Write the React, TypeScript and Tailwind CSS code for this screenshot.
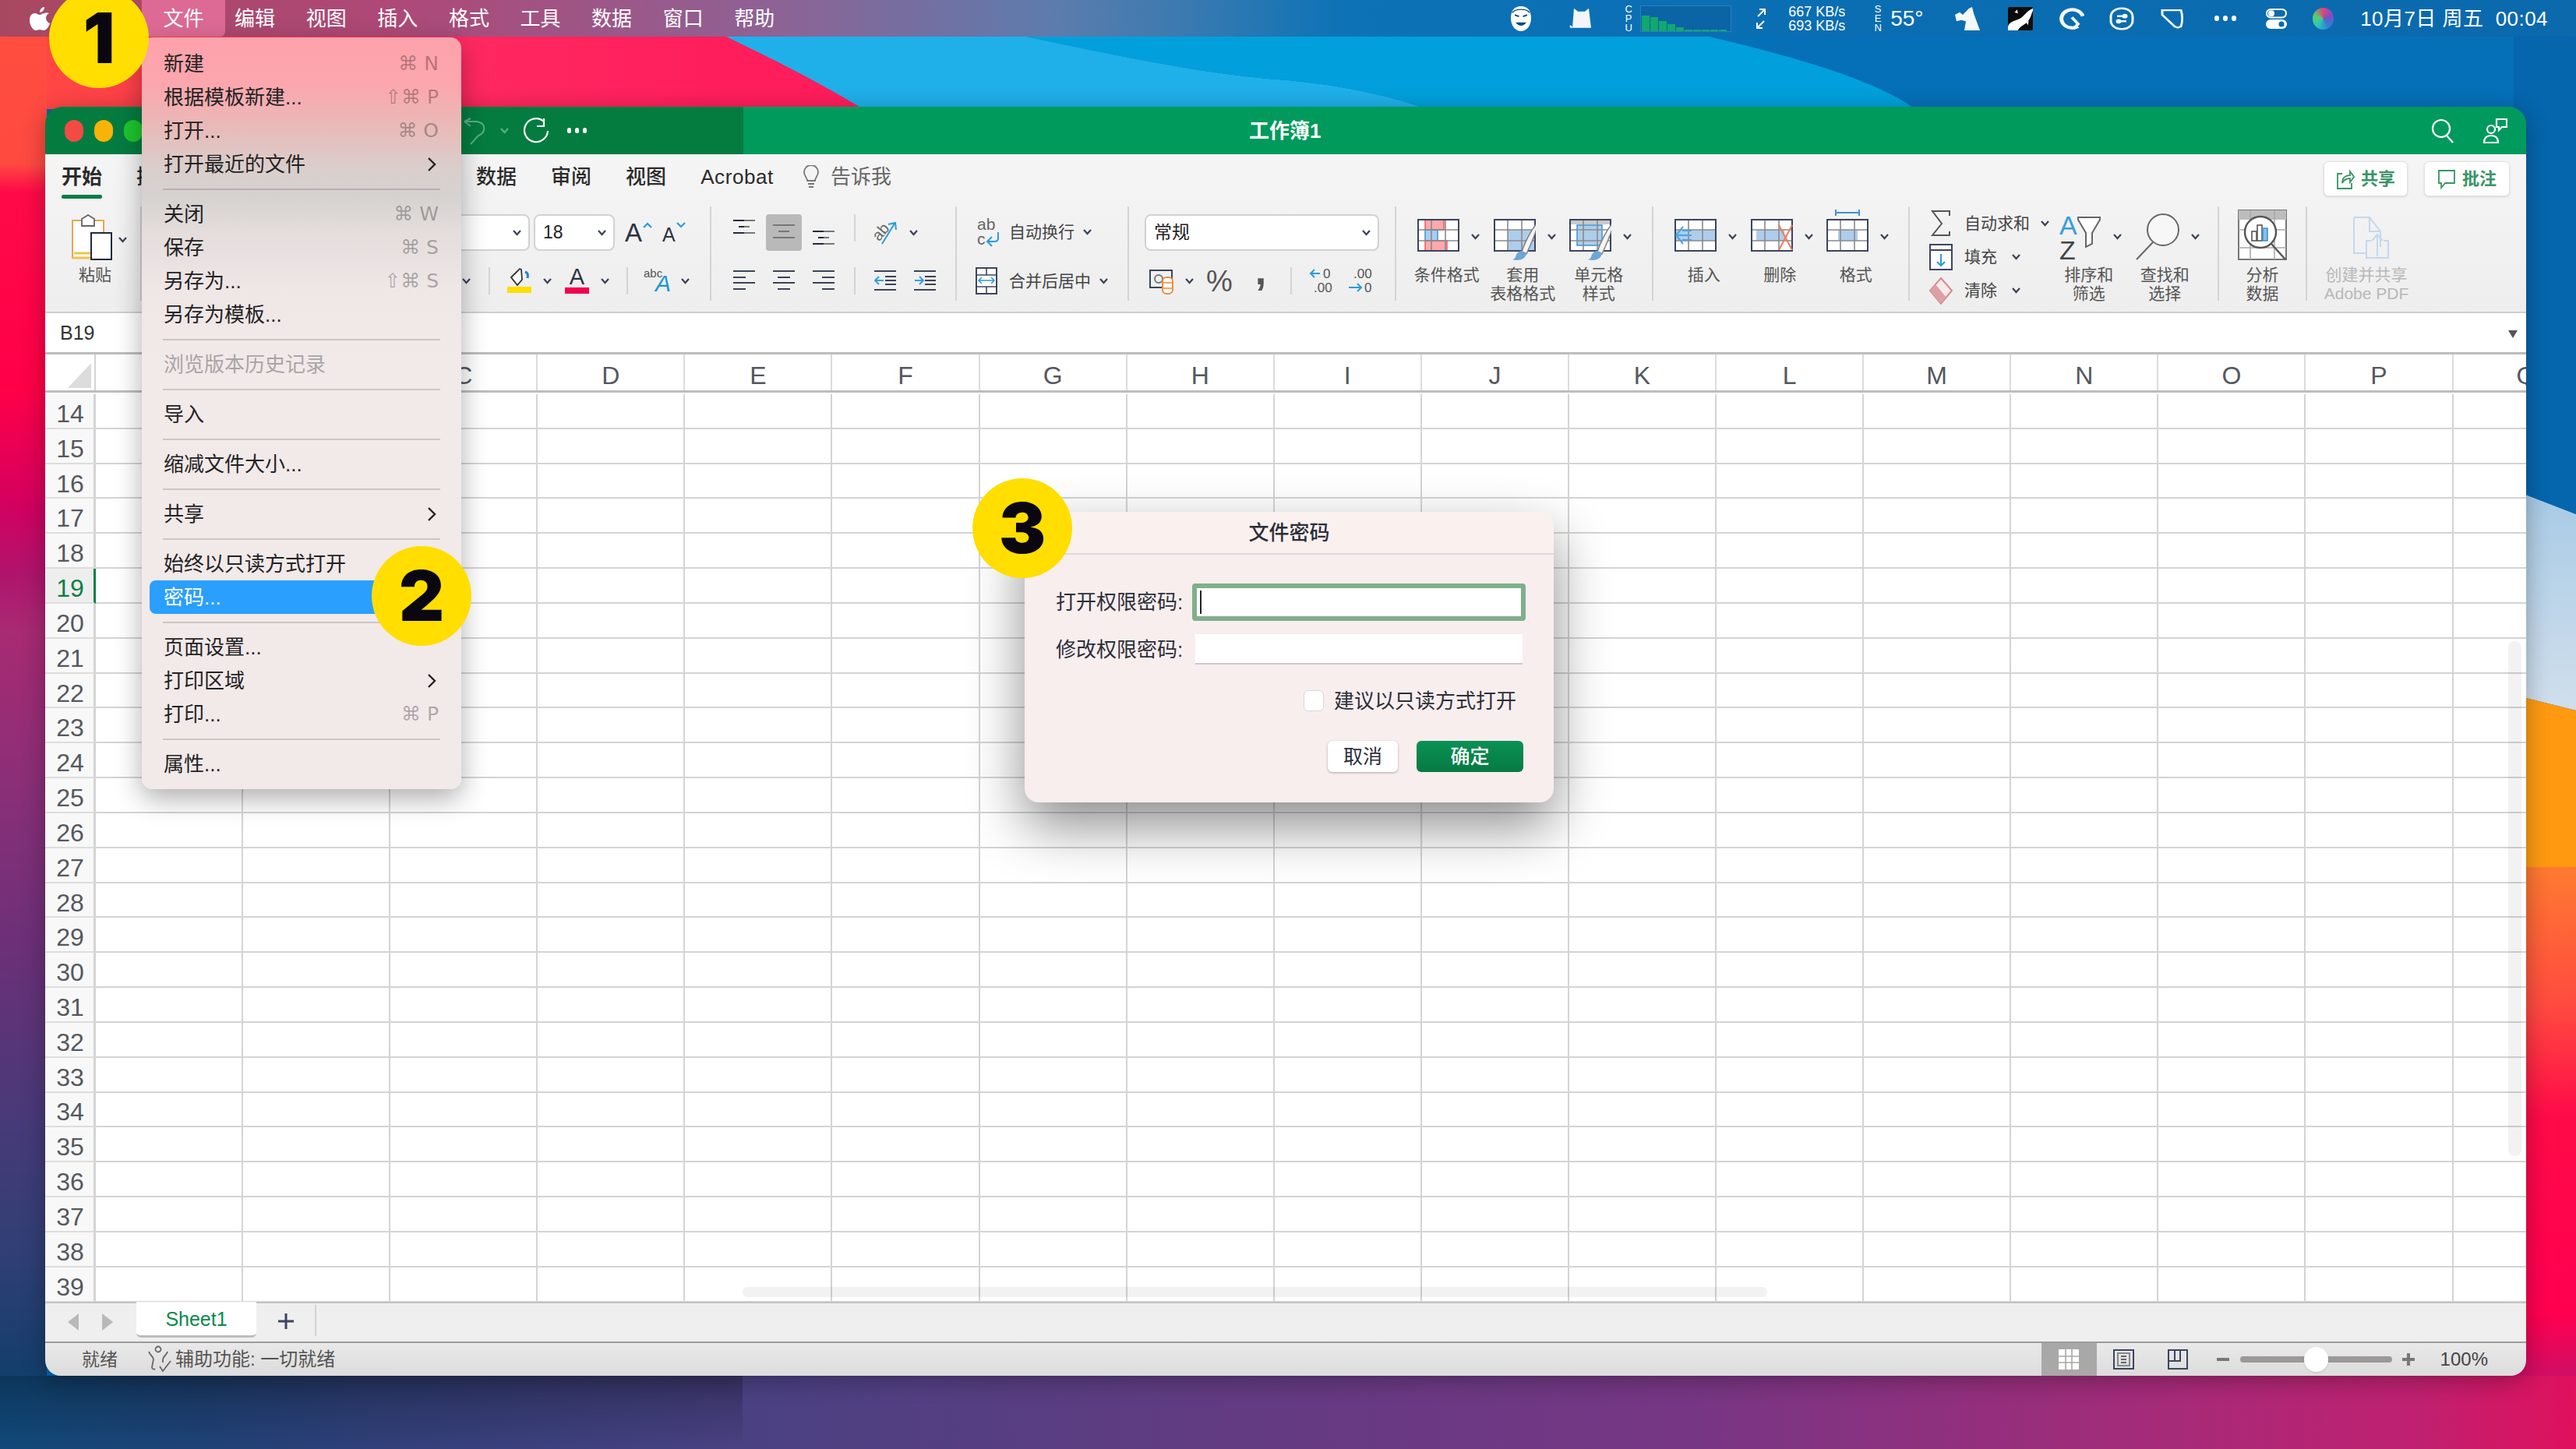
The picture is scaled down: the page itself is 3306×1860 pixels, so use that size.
import React from "react";

const NAVY = "#3c4560";
const GREY = "#8a8a8a";

function Chev({ className = "", color = "#3b4256" }: { className?: string; color?: string }) {
  return (
    <svg width="13" height="13" viewBox="0 0 13 13" fill="none" stroke={color} strokeWidth="2.2" className={"shrink-0 " + className}>
      <path d="M2 4l4.5 5L11 4" />
    </svg>
  );
}

function Table({ children, over }: { children?: React.ReactNode; over?: React.ReactNode }) {
  return (
    <svg width="54" height="76" viewBox="0 0 54 76" fill="none" className="shrink-0">
      <rect x="1" y="17" width="52" height="40" fill="#fff" />
      {children}
      <path d="M18 17v40M36 17v40M1 30h52M1 44h52" stroke={GREY} strokeWidth="1.6" />
      <rect x="1" y="17" width="52" height="40" stroke={NAVY} strokeWidth="2" />
      {over}
    </svg>
  );
}

const Brush = () => (
  <g>
    <path d="M56 21C48 30 40 46 36 58l6 3C48 48 54 34 57 22z" fill="#f4f4f4" stroke="#7a7a7a" strokeWidth="1.4" />
    <path d="M35 57c-4 1-6 4-7 8-1 2-3 3-4 3 5 2 13 1 16-3 2-3 2-5 1-6z" fill="#6ea6d4" />
  </g>
);

const IconCond = () => (
  <Table>
    <rect x="10" y="17" width="24" height="13" fill="#ffa9ac" stroke="#ee5a5a" strokeWidth="1.5" />
    <rect x="10" y="30" width="16" height="14" fill="#a9cdee" stroke="#3b94d4" strokeWidth="1.5" />
    <rect x="10" y="44" width="28" height="13" fill="#ffa9ac" stroke="#ee5a5a" strokeWidth="1.5" />
  </Table>
);
const IconTableStyle = () => (
  <Table over={<Brush />}>
    <rect x="18" y="30" width="35" height="27" fill="#aecdec" />
  </Table>
);
const IconCellStyle = () => (
  <Table over={<Brush />}>
    <rect x="1" y="17" width="52" height="6" fill="#c9c9c9" />
    <rect x="10" y="24" width="32" height="26" fill="#aecdec" stroke="#3b94d4" strokeWidth="1.5" />
  </Table>
);
const IconInsert = () => (
  <Table
    over={
      <path d="M22 37H4m7-11l-9 11 9 11M22 31H10M22 43H10" stroke="#4aa5e0" strokeWidth="2" fill="none" />
    }
  >
    <rect x="1" y="30" width="52" height="14" fill="#aecdec" />
  </Table>
);
const IconDelete = () => (
  <Table over={<path d="M36 24l17 32M53 24L36 56" stroke="#ee7a5a" strokeWidth="2" />}>
    <rect x="7" y="30" width="36" height="14" fill="#aecdec" />
  </Table>
);
const IconFormat = () => (
  <Table over={<path d="M12 4v8M42 4v8M12 8h30" stroke="#3b94d4" strokeWidth="2" />}>
    <rect x="15" y="30" width="25" height="14" fill="#aecdec" />
  </Table>
);
const IconSort = () => (
  <svg width="54" height="76" viewBox="0 0 54 76" fill="none" className="shrink-0">
    <text x="0" y="36" fontSize="34" fontFamily="Liberation Sans" fill="#3a9ce0">A</text>
    <text x="0" y="68" fontSize="34" fontFamily="Liberation Sans" fill="#444">Z</text>
    <path d="M24 14h28v3L42 34v14l-8 4V34L24 17z" stroke="#666" strokeWidth="2" fill="#fff" />
  </svg>
);
const IconFind = () => (
  <svg width="56" height="76" viewBox="0 0 56 76" fill="none" className="shrink-0">
    <circle cx="35" cy="30" r="20" fill="#f7f7f7" stroke="#666" strokeWidth="2" />
    <path d="M22 46L1 68" stroke="#666" strokeWidth="2" />
  </svg>
);
const IconAnalyze = () => (
  <svg width="64" height="76" viewBox="0 0 64 76" fill="none" className="shrink-0 mx-auto">
    <rect x="1" y="5" width="61" height="63" fill="#fff" stroke="#777" strokeWidth="2" />
    <rect x="1" y="5" width="61" height="12" fill="#bdbdbd" />
    <path d="M1 30h61M1 53h61M16 5v63M47 5v63" stroke="#aaa" strokeWidth="1.6" />
    <circle cx="29" cy="33" r="20" fill="#fff" stroke="#555" strokeWidth="2.4" />
    <rect x="18" y="32" width="6" height="12" stroke="#555" strokeWidth="1.6" />
    <rect x="25" y="24" width="6" height="20" stroke="#555" strokeWidth="1.6" />
    <rect x="32" y="28" width="6" height="16" fill="#8ebde6" stroke="#3b94d4" strokeWidth="1.6" />
    <path d="M43 48l18 20" stroke="#555" strokeWidth="2.4" />
  </svg>
);
const IconAdobe = () => (
  <svg width="152" height="76" viewBox="0 0 152 76" fill="none" className="shrink-0" stroke="#c5d8ec" strokeWidth="2">
    <path d="M60 14h20l14 18v20M60 14v46h16M80 14v18h14" />
    <path d="M76 60v6h28V44h-6M82 44h-6v16M90 64V36m-7 8l7-8 7 8" />
  </svg>
);
const IconPaste = () => (
  <svg width="58" height="60" viewBox="0 0 58 60" fill="none" className="shrink-0">
    <rect x="2" y="8" width="40" height="48" fill="#fff" stroke="#e9a552" strokeWidth="2" />
    <path d="M2 56h40M4 50h36" stroke="#f1c24a" strokeWidth="3" />
    <path d="M14 10V6l8-5 8 5v9H14z" fill="#fff" stroke="#666" strokeWidth="1.8" />
    <rect x="26" y="24" width="26" height="34" fill="#fff" stroke="#222a3e" strokeWidth="2" />
  </svg>
);

function AlignV({ rows }: { rows: number[] }) {
  return (
    <svg width="28" height="47" viewBox="0 0 28 47" className="shrink-0" fill="none" strokeWidth="2">
      <path d={`M0 ${rows[0]}h14M7 ${rows[1]}h7M0 ${rows[2]}h14`} stroke="#222a3e" />
      <path d={`M14 ${rows[0]}h14M14 ${rows[1]}h7M14 ${rows[2]}h14`} stroke="#777" />
    </svg>
  );
}
function AlignH({ d }: { d: string }) {
  return (
    <svg width="28" height="35" viewBox="0 0 28 35" className="shrink-0" fill="none" stroke="#3c4356" strokeWidth="2">
      <path d={d} />
    </svg>
  );
}
function Indent({ right }: { right?: boolean }) {
  return (
    <svg width="28" height="35" viewBox="0 0 28 35" className="shrink-0" fill="none" strokeWidth="2">
      <path d="M0 5h28M0 29h28M14 12h14M14 17h14M14 22h14" stroke="#3c4356" />
      <path d={right ? "M1 17h10M7 12l5 5-5 5" : "M12 17H2M6 12l-5 5 5 5"} stroke="#37a0e0" />
    </svg>
  );
}

function Big({ icon, lines }: { icon: React.ReactNode; lines: string[] }) {
  return (
    <div className="w-[97.5px] shrink-0 flex flex-col">
      <div className="h-[76px] pl-[11px] flex items-center">
        {icon}
        <Chev className="ml-[14px]" />
      </div>
      <div className="text-center text-[21px] leading-[24px] text-[#555]">
        {lines.map((l) => (
          <div key={l}>{l}</div>
        ))}
      </div>
    </div>
  );
}

const Sep = ({ className = "" }: { className?: string }) => <div className={"w-[2px] h-[35px] bg-[#d4d4d4] shrink-0 " + className} />;

function Group({ className, children }: { className: string; children: React.ReactNode }) {
  return <div className={"h-[121px] border-r-2 border-[#d4d4d4] shrink-0 " + className}>{children}</div>;
}

function Select({ className, text }: { className: string; text?: string }) {
  return (
    <div className={"h-[47px] rounded-[8px] bg-white border-2 border-[#d2d2d2] flex items-center pl-[10px] pr-[8px] text-[23px] text-[#222] " + className}>
      <span>{text}</span>
      <Chev className="ml-auto" />
    </div>
  );
}

const Menubar = () => {
  const items = ["编辑", "视图", "插入", "格式", "工具", "数据", "窗口", "帮助"];
  const bars = [20, 18, 13, 9, 5, 2, 2, 2, 2, 2];
  return (
    <div className="h-[47px] flex items-center text-white text-[26px] leading-none bg-[linear-gradient(90deg,#a84860_0%,#ae4877_15%,#8e6294_30%,#5c7cad_41%,#3a7ab0_46%,#0d73b6_52%,#0a6fb4_65%,#0b69ac_100%)]">
      <svg width="26" height="30" viewBox="0 0 26 30" fill="#fff" className="ml-[38px] shrink-0">
        <path d="M19 8c-3 0-4 2-6 2S9 8 7 8c-4 0-7 3-7 9 0 6 4 13 8 13 2 0 3-1 5-1s3 1 5 1c4 0 7-6 8-9-3-1-5-4-5-7 0-3 2-5 4-6-2-1-4-1-6 0zM13 7c0-4 3-7 6-7 0 4-3 7-6 7z" />
      </svg>
      <div className="ml-[118px] w-[107px] h-[47px] bg-[#dd6a94] rounded-b-[6px] flex items-center justify-center -mr-[7.7px] shrink-0">文件</div>
      {items.map((t) => (
        <div key={t} className="w-[91.6px] flex justify-center shrink-0">{t}</div>
      ))}
      <div className="ml-auto flex items-center pr-[36px] shrink-0">
        <svg width="34" height="34" viewBox="0 0 34 36" className="shrink-0" preserveAspectRatio="none">
          <path d="M17 1C8 1 4 8 4 17c0 11 6 18 13 18s13-7 13-18C30 8 26 1 17 1z" fill="#fff" />
          <path d="M9 12l6 2-1 2-5-2zM25 12l-6 2 1 2 5-2zM10 23c4 6 10 6 14 0z" fill="#174a78" />
          <path d="M6 10C9 4 25 4 28 10" stroke="#174a78" strokeWidth="1.4" fill="none" />
        </svg>
        <svg width="34" height="30" viewBox="0 0 34 36" className="ml-[43px] shrink-0" preserveAspectRatio="none">
          <path d="M8 2l5 5h9l5-5 3 30H6zM6 32c-2 1-4 0-3-4l2 1z" fill="#f2f6fa" />
        </svg>
        <div className="ml-[38px] w-[12px] text-[13px] leading-[12px] text-center flex flex-col">
          <span>C</span><span>P</span><span>U</span>
        </div>
        <div className="ml-[9px] w-[117px] h-[34px] border border-[#2a80b8] flex items-end gap-[1px] pl-[1px] bg-[#0a64a6]">
          {bars.map((h, i) => (
            <div key={i} className="w-[10px] bg-[#10a870]" style={{ height: h + "px" }} />
          ))}
        </div>
        <svg width="16" height="30" viewBox="0 0 16 30" fill="none" stroke="#fff" strokeWidth="2" className="ml-[30px] shrink-0">
          <path d="M4 12L13 3M6 3h7v7M12 18L3 27M3 20v7h7" />
        </svg>
        <div className="ml-[27px] w-[78px] text-[18px] leading-[18px] whitespace-nowrap">
          <div>667 KB/s</div>
          <div>693 KB/s</div>
        </div>
        <div className="ml-[31px] w-[12px] text-[13px] leading-[12px] text-center flex flex-col">
          <span>S</span><span>E</span><span>N</span>
        </div>
        <div className="ml-[10px] w-[41px] text-[28px] whitespace-nowrap">55°</div>
        <svg width="36" height="30" viewBox="0 0 36 36" fill="#f4f8fb" className="ml-[40px] shrink-0" preserveAspectRatio="none">
          <path d="M2 12l6-4 4 4 8-10 4-2 2 10 8 26H14l2-14-6-2-6 2z" />
        </svg>
        <svg width="32" height="30" viewBox="0 0 30 36" className="ml-[34px] shrink-0" preserveAspectRatio="none">
          <rect width="30" height="36" rx="2" fill="#0b0b0b" />
          <path d="M30 2C22 6 20 14 14 18S2 22 0 30v6h12c2-6 8-8 12-14s4-12 6-16z" fill="#fff" />
          <path d="M8 8l3-4 1 6zM22 24l3-3-1 7z" fill="#fff" />
        </svg>
        <svg width="32" height="30" viewBox="0 0 32 36" fill="none" stroke="#f4f8fb" className="ml-[34px] shrink-0" preserveAspectRatio="none">
          <path d="M24 30A14 14 0 1 1 30 14" strokeWidth="5" />
          <path d="M16 16l8 10-6 8" strokeWidth="4" />
        </svg>
        <svg width="32" height="30" viewBox="0 0 32 36" fill="none" stroke="#f4f8fb" strokeWidth="3" className="ml-[32px] shrink-0" preserveAspectRatio="none">
          <rect x="2" y="2" width="28" height="32" rx="13" />
          <path d="M10 14h12M22 22H10" />
          <circle cx="20" cy="14" r="2" fill="#fff" />
          <circle cx="12" cy="22" r="2" fill="#fff" />
        </svg>
        <svg width="32" height="27" viewBox="0 0 32 36" fill="none" stroke="#f4f8fb" strokeWidth="3" className="ml-[33px] shrink-0" preserveAspectRatio="none">
          <path d="M3 4h24c2 8 2 20 0 28l-4 2-4-2-16-20z" />
        </svg>
        <div className="ml-[38px] w-[28px] flex justify-between">
          <span className="w-[6px] h-[7px] rounded-full bg-white" />
          <span className="w-[6px] h-[7px] rounded-full bg-white" />
          <span className="w-[6px] h-[7px] rounded-full bg-white" />
        </div>
        <svg width="27" height="26" viewBox="0 0 27 26" fill="none" className="ml-[38px] shrink-0">
          <rect x="1" y="1" width="25" height="10.5" rx="5.2" stroke="#fff" strokeWidth="2" />
          <circle cx="7" cy="6.2" r="4" fill="#fff" />
          <rect x="0" y="14" width="27" height="12" rx="6" fill="#fff" />
          <circle cx="20" cy="20" r="3.6" fill="#0b69ac" />
        </svg>
        <div className="ml-[33px] w-[27px] h-[28px] rounded-full bg-[conic-gradient(#e0447c,#7a4fc4,#2f7fd8,#2ec4b6,#55d06e,#e0447c)]" />
        <div className="ml-[34px] whitespace-pre tracking-[0.45px]">10月7日 周五  00:04</div>
      </div>
    </div>
  );
};

const Ribbon = () => (
  <div className="h-[204px] bg-gradient-to-b from-[#f5f5f5] to-[#eeeeee] border-b-2 border-[#cfcfcf]">
    <div className="h-[58px] mb-[9px] flex items-center gap-[44px] pl-[21px] pr-[21px] text-[26px] leading-none text-[#2b2b2b] font-medium">
      <div className="relative font-bold">
        开始
        <div className="absolute left-0 right-0 top-[36px] h-[5px] rounded-[2px] bg-[#0a7c44]" />
      </div>
      <div>插入</div>
      <div>绘图</div>
      <div>页面布局</div>
      <div>公式</div>
      <div>数据</div>
      <div>审阅</div>
      <div>视图</div>
      <div className="tracking-[0.6px]">Acrobat</div>
      <div className="flex items-center text-[#666] font-normal -ml-[7px]">
        <svg width="22" height="30" viewBox="0 0 22 30" fill="none" stroke="#777" strokeWidth="1.8" className="mr-[14px]">
          <path d="M6 20c0-4-4-6-4-11a9 9 0 0 1 18 0c0 5-4 7-4 11zM7 24h8M8 28h6" />
        </svg>
        告诉我
      </div>
      <div className="ml-auto mt-[5px] flex gap-[21px] text-[22px] font-bold text-[#3a9466]">
        <div className="w-[108px] h-[45px] bg-white rounded-[6px] border border-[#e2e2e2] shadow-sm flex items-center justify-center gap-[8px]">
          <svg width="24" height="26" viewBox="0 0 24 26" fill="none" stroke="#3a9466" strokeWidth="1.8">
            <path d="M8 6H2v19h18v-7M8 18c0-7 4-10 10-10V3l5 7-5 7v-5c-5 0-8 2-10 6z" />
          </svg>
          共享
        </div>
        <div className="w-[110px] h-[45px] bg-white rounded-[6px] border border-[#e2e2e2] shadow-sm flex items-center justify-center gap-[8px]">
          <svg width="24" height="26" viewBox="0 0 24 26" fill="none" stroke="#3a9466" strokeWidth="1.8">
            <path d="M2 2h20v16H10l-5 6v-6H2z" />
          </svg>
          批注
        </div>
      </div>
    </div>

    <div className="flex h-[121px]">
      <Group className="w-[124px]">
        <div className="flex items-start pl-[33px] pt-[10px] h-[76px]">
          <IconPaste />
          <Chev className="mt-[26px] ml-[2px]" />
        </div>
        <div className="pl-[43px] text-[21px] leading-[24px] text-[#555]">粘贴</div>
      </Group>

      <Group className="w-[731px] pt-[10px]">
        <div className="flex items-center h-[47px]">
          <Select className="ml-[10px] w-[488px]" />
          <Select className="ml-[5px] w-[104px]" text="18" />
          <div className="ml-[13px] w-[40px] flex items-start text-[#2e3242] text-[33px] leading-none">
            A
            <svg width="14" height="10" viewBox="0 0 14 10" fill="none" stroke="#2b9bd8" strokeWidth="2.2" className="mt-[2px]">
              <path d="M2 8l5-5 5 5" />
            </svg>
          </div>
          <div className="ml-[8px] w-[40px] flex items-start text-[#2e3242] text-[25px] leading-none mt-[6px]">
            A
            <svg width="14" height="10" viewBox="0 0 14 10" fill="none" stroke="#2b9bd8" strokeWidth="2.2" className="-mt-[5px]">
              <path d="M2 2l5 5 5-5" />
            </svg>
          </div>
        </div>
        <div className="flex items-center h-[35px] mt-[21px]">
          <Chev className="ml-[410px]" />
          <Sep className="ml-[22px]" />
          <svg width="31" height="35" viewBox="0 0 31 35" fill="none" className="ml-[22px] shrink-0">
            <path d="M5 13L16 2l2 1 1 13-6 7z" stroke="#333" strokeWidth="1.8" fill="#fff" />
            <path d="M23 6c3 1 4 4 3 8" stroke="#1b87c9" strokeWidth="3" />
            <rect y="25" width="31" height="8" fill="#ffde00" />
          </svg>
          <Chev className="ml-[14px]" />
          <div className="ml-[16px] w-[31px] h-[35px] flex flex-col items-center text-[29px] leading-[25px] text-[#2e3242] shrink-0">
            A
            <div className="w-[31px] h-[8px] bg-[#f5004f] mt-[1px] shrink-0" />
          </div>
          <Chev className="ml-[14px]" />
          <Sep className="ml-[21px]" />
          <div className="ml-[20px] w-[36px] h-[35px] relative shrink-0 leading-none">
            <span className="absolute left-0 top-0 text-[15px] text-[#555]">abc</span>
            <span className="absolute right-[1px] top-[6px] text-[30px] italic text-[#1b95d8]">A</span>
          </div>
          <Chev className="ml-[11px]" />
        </div>
      </Group>

      <Group className="w-[315px] pt-[10px]">
        <div className="flex items-start h-[47px]">
          <div className="ml-[28px]"><AlignV rows={[8, 16, 24]} /></div>
          <div className="ml-[14px] w-[46px] h-[47px] rounded-[4px] bg-[#b9b9b9] flex justify-center">
            <svg width="28" height="47" viewBox="0 0 28 47" fill="none" stroke="#777" strokeWidth="2">
              <path d="M0 14h28M7 22h14M0 30h28" />
            </svg>
          </div>
          <div className="ml-[14px]"><AlignV rows={[22, 30, 38]} /></div>
          <Sep className="ml-[25px]" />
          <svg width="34" height="47" viewBox="0 0 34 47" fill="none" className="ml-[20px] shrink-0">
            <text x="2" y="30" fontSize="20" fontFamily="Liberation Sans" fill="#666" transform="rotate(-50 12 24)">ab</text>
            <path d="M14 38L30 12M22 13l9-2 1 9" stroke="#2b9bd8" strokeWidth="2" />
          </svg>
          <Chev className="ml-[14px] mt-[17px]" />
        </div>
        <div className="flex items-center h-[35px] mt-[21px]">
          <div className="ml-[28px]"><AlignH d="M0 5h28M0 13h16M0 20h28M0 28h16" /></div>
          <div className="ml-[23px]"><AlignH d="M0 5h28M6 13h16M0 20h28M6 28h16" /></div>
          <div className="ml-[23px]"><AlignH d="M0 5h28M12 13h16M0 20h28M12 28h16" /></div>
          <Sep className="ml-[25px]" />
          <div className="ml-[24px]"><Indent /></div>
          <div className="ml-[23px]"><Indent right /></div>
        </div>
      </Group>

      <Group className="w-[221px] pt-[10px] text-[21px] leading-none text-[#444]">
        <div className="flex items-center h-[47px] mt-[-1px]">
          <svg width="32" height="44" viewBox="0 0 32 44" fill="none" className="ml-[24px] shrink-0">
            <text x="2" y="19" fontSize="21" fontFamily="Liberation Sans" fill="#666">ab</text>
            <text x="2" y="38" fontSize="21" fontFamily="Liberation Sans" fill="#666">c</text>
            <path d="M29 22v8c0 3-2 4-5 4h-9m6-6l-6 6 6 6" stroke="#2b9bd8" strokeWidth="2" />
          </svg>
          <div className="ml-[11px]">自动换行</div>
          <Chev className="ml-[10px]" />
        </div>
        <div className="flex items-center h-[35px] mt-[22px]">
          <svg width="28" height="35" viewBox="0 0 28 35" fill="none" className="ml-[24px] shrink-0">
            <rect x="1" y="1" width="26" height="33" stroke={NAVY} strokeWidth="2" fill="#fff" />
            <path d="M1 10h26M1 25h26M14 1v9M14 25v9" stroke={NAVY} strokeWidth="1.6" />
            <path d="M4 17h20M8 13l-4 4 4 4M20 13l4 4-4 4" stroke="#2b9bd8" strokeWidth="1.6" />
          </svg>
          <div className="ml-[15px]">合并后居中</div>
          <Chev className="ml-[10px]" />
        </div>
      </Group>

      <Group className="w-[343px] pt-[10px]">
        <Select className="ml-[20px] w-[301px]" text="常规" />
        <div className="flex items-center h-[35px] mt-[21px] text-[#555]">
          <svg width="32" height="35" viewBox="0 0 32 35" fill="none" className="ml-[26px] shrink-0">
            <rect x="1" y="4" width="28" height="22" stroke={NAVY} strokeWidth="2" />
            <circle cx="12" cy="15" r="5" stroke="#777" strokeWidth="2" />
            <rect x="17" y="13" width="13" height="21" rx="5" fill="#fff" stroke="#ef8a3a" strokeWidth="2" />
            <path d="M17 20h13M17 27h13" stroke="#ef8a3a" strokeWidth="1.6" />
          </svg>
          <Chev className="ml-[13px]" />
          <div className="ml-[15px] w-[34px] text-[38px] leading-none font-light text-center">%</div>
          <div className="ml-[28px] w-[16px] text-[52px] leading-none font-bold h-[35px] -translate-y-[22px] text-center">,</div>
          <Sep className="ml-[30px]" />
          <svg width="32" height="35" viewBox="0 0 32 35" fill="none" className="ml-[22px] shrink-0">
            <text x="18" y="14" fontSize="17" fontFamily="Liberation Sans" fill="#555">0</text>
            <text x="6" y="32" fontSize="17" fontFamily="Liberation Sans" fill="#555">.00</text>
            <path d="M14 8H2m5-5L2 8l5 5" stroke="#2b9bd8" strokeWidth="2" />
          </svg>
          <svg width="32" height="35" viewBox="0 0 32 35" fill="none" className="ml-[17px] shrink-0">
            <text x="8" y="14" fontSize="17" fontFamily="Liberation Sans" fill="#555">.00</text>
            <text x="22" y="32" fontSize="17" fontFamily="Liberation Sans" fill="#555">0</text>
            <path d="M2 26h16m-5-5l5 5-5 5" stroke="#2b9bd8" strokeWidth="2" />
          </svg>
        </div>
      </Group>

      <Group className="w-[330px] pl-[16px] flex">
        <Big icon={<IconCond />} lines={["条件格式"]} />
        <Big icon={<IconTableStyle />} lines={["套用", "表格格式"]} />
        <Big icon={<IconCellStyle />} lines={["单元格", "样式"]} />
      </Group>

      <Group className="w-[329px] pl-[16px] flex">
        <Big icon={<IconInsert />} lines={["插入"]} />
        <Big icon={<IconDelete />} lines={["删除"]} />
        <Big icon={<IconFormat />} lines={["格式"]} />
      </Group>

      <Group className="w-[397px] flex">
        <div className="w-[181px] shrink-0 text-[21px] leading-none text-[#444]">
          <div className="h-[43px] flex items-center">
            <svg width="34" height="36" viewBox="0 0 34 36" fill="none" stroke="#555" strokeWidth="2" className="ml-[23px] shrink-0">
              <path d="M28 8V2H6l12 16L6 33h22v-5" />
            </svg>
            <div className="ml-[13px]">自动求和</div>
            <Chev className="ml-[13px]" />
          </div>
          <div className="h-[43px] flex items-center">
            <svg width="34" height="36" viewBox="0 0 34 36" fill="none" strokeWidth="2" className="ml-[23px] shrink-0">
              <rect x="3" y="2" width="28" height="32" fill="#fff" stroke={NAVY} />
              <path d="M3 9h28" stroke={NAVY} />
              <path d="M17 14v15m-5-5l5 5 5-5" stroke="#2b9bd8" />
            </svg>
            <div className="ml-[13px]">填充</div>
            <Chev className="ml-[18px]" />
          </div>
          <div className="h-[43px] flex items-center">
            <svg width="34" height="36" viewBox="0 0 34 36" fill="none" className="ml-[23px] shrink-0">
              <path d="M17 2l14 16-14 17L3 18z" fill="#f7eaea" stroke="#d68a90" strokeWidth="2" />
              <path d="M3 18l7-8 14 17-7 8z" fill="#dba0a6" />
            </svg>
            <div className="ml-[13px]">清除</div>
            <Chev className="ml-[18px]" />
          </div>
        </div>
        <Big icon={<IconSort />} lines={["排序和", "筛选"]} />
        <Big icon={<IconFind />} lines={["查找和", "选择"]} />
      </Group>

      <Group className="w-[113px]">
        <IconAnalyze />
        <div className="text-center text-[21px] leading-[24px] text-[#555]">
          <div>分析</div>
          <div>数据</div>
        </div>
      </Group>

      <div className="w-[152px] h-[121px] shrink-0">
        <IconAdobe />
        <div className="text-center text-[21px] leading-[24px] text-[#b8b8b8]">
          <div>创建并共享</div>
          <div>Adobe PDF</div>
        </div>
      </div>
    </div>
  </div>
);

const COLS = "ABCDEFGHIJKLMNOPQ".split("");
const ROWS = Array.from({ length: 26 }, (_, i) => 14 + i);

const Sheet = () => (
  <>
    <div className="h-[53px] bg-white border-b-[3px] border-[#bdbdbd] flex items-center pl-[19px] pr-[11px] pt-[2px] text-[25px] text-[#333]">
      B19
      <svg width="12" height="12" viewBox="0 0 12 12" fill="#555" className="ml-auto">
        <path d="M0 2h12L6 12z" />
      </svg>
    </div>
    <div className="h-[49px] bg-white border-b-[3px] border-[#bdbdbd] flex overflow-hidden">
      <div className="w-[65px] shrink-0 border-r-2 border-[#d4d4d4] flex items-end justify-end pr-[4px] pb-[3px]">
        <svg width="30" height="32" viewBox="0 0 30 32" fill="#dcdcdc">
          <path d="M30 0v32H0z" />
        </svg>
      </div>
      {COLS.map((c) => (
        <div key={c} className="w-[189.1px] shrink-0 border-r-2 border-[#dcdcdc] flex items-center justify-center pt-[8px] text-[32px] leading-none text-[#55585f]">
          {c}
        </div>
      ))}
    </div>
    <div className="h-[1167px] bg-white overflow-hidden pt-[2px]">
      {ROWS.map((r) => (
        <div key={r} className="h-[44.84px] flex">
          <div
            className={
              "w-[65px] shrink-0 border-b-2 border-r-[3px] flex items-center justify-center pt-[7px] pl-[2px] text-[32px] leading-none " +
              (r === 19 ? "bg-[#eeeeee] text-[#0a8043] border-r-[#0a8043] border-b-[#dddddd]" : "bg-[#f8f8f8] text-[#55585f] border-r-[#d4d4d4] border-b-[#dddddd]")
            }
          >
            {r}
          </div>
          {COLS.map((c) => (
            <div key={c} className="w-[189.1px] shrink-0 border-r-2 border-b-2 border-[#d4d4d4]" />
          ))}
        </div>
      ))}
    </div>
    <div className="h-[51px] bg-[#efefef] border-t-2 border-[#c4c4c4] flex items-start">
      <svg width="16" height="22" viewBox="0 0 16 22" fill="#b9b9b9" className="ml-[28px] mt-[13px] shrink-0">
        <path d="M15 0v22L1 11z" />
      </svg>
      <svg width="16" height="22" viewBox="0 0 16 22" fill="#b9b9b9" className="ml-[28px] mt-[13px] shrink-0">
        <path d="M1 0v22l14-11z" />
      </svg>
      <div className="ml-[29px] -mt-[2px] w-[154px] h-[46px] bg-white rounded-b-[6px] border-b-[3px] border-[#bdbdbd] flex items-center justify-center pt-[2px] text-[25px] text-[#0a8a4a] leading-none">
        Sheet1
      </div>
      <svg width="24" height="24" viewBox="0 0 24 24" fill="none" stroke={NAVY} strokeWidth="3" className="ml-[26px] mt-[11px] shrink-0">
        <path d="M12 2v20M2 12h20" />
      </svg>
      <div className="ml-[25px] mt-[2px] w-[2px] h-[40px] bg-[#d4d4d4]" />
    </div>
    <div className="h-[44px] border-t-2 border-[#9c9c9c] bg-gradient-to-b from-[#e9e9e9] to-[#dcdcdc] flex items-center text-[23px] leading-none text-[#555]">
      <div className="ml-[47px]">就绪</div>
      <svg width="32" height="36" viewBox="0 0 32 36" fill="none" stroke="#666" strokeWidth="1.8" className="ml-[38px] shrink-0">
        <circle cx="14" cy="5" r="3.5" />
        <path d="M2 8c2 6 6 6 6 10l-2 10c0 3 3 3 4 2M26 8c-2 6-6 6-6 10v4M16 27l4 6 10-13" />
      </svg>
      <div className="ml-[4px] text-[24px]">辅助功能: 一切就绪</div>
      <div className="ml-auto w-[71px] h-[42px] bg-[#a8a8a8] flex items-center justify-center shrink-0">
        <svg width="26" height="26" viewBox="0 0 26 26">
          <rect width="26" height="26" rx="1" fill="#fff" />
          <path d="M9 0v26M17 0v26M0 9h26M0 17h26" stroke="#a8a8a8" strokeWidth="1.6" />
        </svg>
      </div>
      <svg width="27" height="26" viewBox="0 0 27 26" fill="none" stroke={NAVY} strokeWidth="2" className="ml-[21px] shrink-0">
        <rect x="1" y="1" width="25" height="24" />
        <rect x="6" y="5" width="15" height="16" stroke="#888" />
        <path d="M10 9h7M10 13h7M10 17h7" stroke="#666" />
      </svg>
      <svg width="26" height="26" viewBox="0 0 26 26" fill="none" stroke={NAVY} strokeWidth="2" className="ml-[43px] shrink-0">
        <rect x="1" y="1" width="24" height="24" />
        <path d="M1 15h15V1M9 1v14" />
      </svg>
      <div className="ml-[37px] w-[16px] h-[4px] bg-[#777] shrink-0" />
      <div className="ml-[14px] w-[195px] h-[8px] rounded-full bg-[#9c9898] relative shrink-0">
        <div className="absolute left-[82px] top-[-12px] w-[31px] h-[32px] rounded-full bg-white shadow-sm" />
      </div>
      <div className="ml-[13px] w-[16px] h-[16px] relative shrink-0">
        <div className="absolute left-0 top-[6px] w-[16px] h-[4px] bg-[#777]" />
        <div className="absolute left-[6px] top-0 w-[4px] h-[16px] bg-[#777]" />
      </div>
      <div className="ml-[33px] mr-[49px] text-[24px] text-[#444]">100%</div>
    </div>
  </>
);

const Window = () => (
  <div className="absolute left-[58px] top-[137px] w-[3184px] h-[1629px] rounded-t-[22px] rounded-b-[20px] overflow-hidden shadow-[0_6px_30px_rgba(0,0,0,0.3)]">
    <div className="h-[61px] flex">
      <div className="w-[896px] bg-[#047c40] flex items-center shrink-0">
        <span className="ml-[25px] w-[24px] h-[28px] rounded-full bg-[#f34a44]" />
        <span className="ml-[14px] w-[24px] h-[28px] rounded-full bg-[#f9b208]" />
        <span className="ml-[14px] w-[24px] h-[28px] rounded-full bg-[#1cc62e]" />
        <svg width="30" height="36" viewBox="0 0 30 36" fill="none" stroke="#5cae84" strokeWidth="2" className="ml-[411px] shrink-0">
          <path d="M2 6l8-4M2 6l8 6M2 6h16c12 2 12 14 2 18L10 35" />
        </svg>
        <Chev className="ml-[17px]" color="#5cae84" />
        <svg width="34" height="34" viewBox="0 0 34 34" fill="none" stroke="#fff" strokeWidth="2.2" className="ml-[18px] shrink-0">
          <path d="M26 5a15 15 0 1 0 5 12M26 1v10h-9" />
        </svg>
        <div className="ml-[22px] flex gap-[5px]">
          <span className="w-[5px] h-[7px] rounded-full bg-white" />
          <span className="w-[5px] h-[7px] rounded-full bg-white" />
          <span className="w-[5px] h-[7px] rounded-full bg-white" />
        </div>
      </div>
      <div className="flex-1 bg-[#009a5c] flex items-center text-white">
        <div className="ml-[649px] text-[26px] font-bold leading-none">工作簿1</div>
        <svg width="30" height="32" viewBox="0 0 30 32" fill="none" stroke="#fff" strokeWidth="2.2" className="ml-auto shrink-0">
          <ellipse cx="13" cy="13" rx="11" ry="11" />
          <path d="M20 22l8 9" />
        </svg>
        <svg width="32" height="34" viewBox="0 0 32 34" fill="none" stroke="#fff" strokeWidth="2.2" className="ml-[36px] mr-[24px] shrink-0">
          <circle cx="11" cy="15" r="5" />
          <path d="M2 32c0-6 3-9 9-9s9 3 9 9zM18 2h13v10h-6l-4 4v-4h-3z" />
        </svg>
      </div>
    </div>
    <Ribbon />
    <Sheet />
    <div className="absolute left-[3161px] top-[686px] w-[17px] h-[661px] rounded-[8px] bg-black/[0.05]" />
    <div className="absolute left-[895px] top-[1515px] w-[1315px] h-[13px] rounded-[6px] bg-black/[0.05]" />
  </div>
);

type MI = { t?: string; s?: string; arrow?: boolean; dis?: boolean; sel?: boolean; sep?: boolean };
const MENU: MI[] = [
  { t: "新建", s: "⌘ N" },
  { t: "根据模板新建...", s: "⇧⌘ P" },
  { t: "打开...", s: "⌘ O" },
  { t: "打开最近的文件", arrow: true },
  { sep: true },
  { t: "关闭", s: "⌘ W" },
  { t: "保存", s: "⌘ S" },
  { t: "另存为...", s: "⇧⌘ S" },
  { t: "另存为模板..." },
  { sep: true },
  { t: "浏览版本历史记录", dis: true },
  { sep: true },
  { t: "导入" },
  { sep: true },
  { t: "缩减文件大小..." },
  { sep: true },
  { t: "共享", arrow: true },
  { sep: true },
  { t: "始终以只读方式打开" },
  { t: "密码...", sel: true },
  { sep: true },
  { t: "页面设置..." },
  { t: "打印区域", arrow: true },
  { t: "打印...", s: "⌘ P" },
  { sep: true },
  { t: "属性..." },
];

const Arrow = () => (
  <svg width="12" height="20" viewBox="0 0 12 20" fill="none" stroke="#222" strokeWidth="2.4" className="ml-auto mr-[4px]">
    <path d="M2 2l8 8-8 8" />
  </svg>
);

const FileMenu = () => (
  <div className="absolute left-[182px] top-[48px] w-[410px] h-[965px] rounded-[14px] py-[12px] text-[26px] leading-none shadow-[0_12px_34px_rgba(0,0,0,0.32)] bg-[linear-gradient(180deg,#fea2ab_0px,#fca6ad_60px,#e9bab8_115px,#d9cfcc_170px,#d6d2d0_205px,#e4dddc_250px,#efe6e6_320px,#f2e9e9_420px)]">
    {MENU.map((m, i) =>
      m.sep ? (
        <div key={i} className="h-[21px] flex items-center px-[27px]">
          <div className="h-[2px] w-full bg-black/15" />
        </div>
      ) : (
        <div
          key={i}
          className={
            "h-[43px] mx-[10px] px-[18px] flex items-center rounded-[8px] whitespace-nowrap " +
            (m.sel ? "bg-[#2a9ffd] text-white" : m.dis ? "text-[#aaa5a5]" : "text-[#232323]")
          }
        >
          {m.t}
          {m.s && <span className="ml-auto text-black/30 [font-family:'DejaVu_Sans','Liberation_Sans',sans-serif] text-[25px] mr-[1px]">{m.s}</span>}
          {m.arrow && <Arrow />}
        </div>
      )
    )}
  </div>
);

const Dialog = () => (
  <div className="absolute left-[1315px] top-[657px] w-[679px] h-[373px] rounded-[18px] bg-[#f8eeee] shadow-[0_30px_70px_rgba(0,0,0,0.45)] text-[26px] leading-none text-[#2c2f3a]">
    <div className="h-[55px] border-b-2 border-[#dfd8d8] bg-[#faf1ef] rounded-t-[18px] flex items-center justify-center font-medium">文件密码</div>
    <div className="pl-[40px]">
      <div className="flex items-center mt-[37px] h-[48px]">
        <div className="w-[175px] whitespace-nowrap">打开权限密码:</div>
        <div className="w-[428px] h-[48px] border-[6px] border-[#7fb08c] rounded-[4px] bg-white flex items-center pl-[4px]">
          <div className="w-[2px] h-[30px] bg-[#222]" />
        </div>
      </div>
      <div className="flex items-center mt-[17px] h-[39px]">
        <div className="w-[179px] whitespace-nowrap">修改权限密码:</div>
        <div className="w-[420px] h-[39px] bg-white border-b-2 border-[#cfcaca]" />
      </div>
      <div className="flex items-center mt-[33px] ml-[318px] h-[27px]">
        <div className="w-[26px] h-[27px] rounded-[6px] bg-white border border-[#dcd6d6]" />
        <div className="ml-[13px] whitespace-nowrap">建议以只读方式打开</div>
      </div>
      <div className="flex mt-[38px] ml-[349px] text-[25px]">
        <div className="w-[90px] h-[40px] rounded-[6px] bg-white shadow-[0_1px_3px_rgba(0,0,0,0.3)] flex items-center justify-center">取消</div>
        <div className="ml-[24px] w-[137px] h-[40px] rounded-[6px] bg-gradient-to-b from-[#0b9155] to-[#067a42] text-white flex items-center justify-center font-medium">确定</div>
      </div>
    </div>
  </div>
);

function Badge({ className, n }: { className: string; n: string }) {
  return (
    <div className={"absolute w-[128px] h-[128px] rounded-full bg-[#ffde00] flex items-center justify-center text-[90px] leading-none font-black text-[#0b0710] [font-family:'Inter','Liberation_Sans',sans-serif] " + className}>
      {n}
    </div>
  );
}

const Wallpaper = () => (
  <svg width="3306" height="1860" viewBox="0 0 3306 1860" className="absolute left-0 top-0">
    <defs>
      <linearGradient id="lft" x1="0" y1="47" x2="0" y2="1860" gradientUnits="userSpaceOnUse">
        <stop offset="0" stopColor="#ff4d40" />
        <stop offset="0.09" stopColor="#ff4a40" />
        <stop offset="0.11" stopColor="#ff0a48" />
        <stop offset="0.25" stopColor="#ff0048" />
        <stop offset="0.33" stopColor="#d4005f" />
        <stop offset="0.38" stopColor="#b0146c" />
        <stop offset="0.42" stopColor="#a82a72" />
        <stop offset="0.53" stopColor="#8a2f78" />
        <stop offset="0.65" stopColor="#6a3078" />
        <stop offset="0.77" stopColor="#473a78" />
        <stop offset="0.865" stopColor="#2f3f75" />
        <stop offset="0.945" stopColor="#143e6c" />
        <stop offset="1" stopColor="#0f4a7c" />
      </linearGradient>
      <linearGradient id="top" x1="0" y1="0" x2="932" y2="0" gradientUnits="userSpaceOnUse">
        <stop offset="0" stopColor="#ff4a40" />
        <stop offset="0.6" stopColor="#ff2a60" />
        <stop offset="1" stopColor="#ff1d5c" />
      </linearGradient>
      <linearGradient id="bot" x1="0" y1="0" x2="3306" y2="0" gradientUnits="userSpaceOnUse">
        <stop offset="0" stopColor="#10497a" />
        <stop offset="0.08" stopColor="#1f4276" />
        <stop offset="0.15" stopColor="#32407a" />
        <stop offset="0.29" stopColor="#4a4182" />
        <stop offset="0.45" stopColor="#5f3c82" />
        <stop offset="0.66" stopColor="#773684" />
        <stop offset="0.85" stopColor="#a82a78" />
        <stop offset="0.94" stopColor="#c02070" />
        <stop offset="1" stopColor="#e0105c" />
      </linearGradient>
      <linearGradient id="botshade" x1="0" y1="1766" x2="0" y2="1860" gradientUnits="userSpaceOnUse">
        <stop offset="0" stopColor="#000" stopOpacity="0.25" />
        <stop offset="1" stopColor="#000" stopOpacity="0" />
      </linearGradient>
      <linearGradient id="ice" x1="0" y1="640" x2="0" y2="900" gradientUnits="userSpaceOnUse">
        <stop offset="0" stopColor="#a9cbe6" />
        <stop offset="1" stopColor="#cfdeec" />
      </linearGradient>
      <linearGradient id="rgt" x1="0" y1="1113" x2="0" y2="1860" gradientUnits="userSpaceOnUse">
        <stop offset="0" stopColor="#ff7a30" />
        <stop offset="0.24" stopColor="#ff4a40" />
        <stop offset="0.43" stopColor="#ff0a48" />
        <stop offset="0.77" stopColor="#ff0050" />
        <stop offset="0.89" stopColor="#c81068" />
        <stop offset="1" stopColor="#c01a6c" />
      </linearGradient>
    </defs>
    <rect x="0" y="0" width="3306" height="140" fill="#0570b8" />
    <rect x="0" y="0" width="1110" height="140" fill="url(#top)" />
    <path d="M932 47C990 75 1050 105 1103 137H1822C1790 125 1720 108 1640 102C1550 95 1450 75 1318 47Z" fill="#1fb0ea" />
    <path d="M1318 47C1450 75 1550 95 1640 102C1720 108 1790 125 1822 137H2454C2400 100 2290 70 2194 47Z" fill="#01a0dc" />
    <rect x="0" y="47" width="60" height="1813" fill="url(#lft)" />
    <rect x="3226" y="47" width="80" height="600" fill="#0566ad" />
    <path d="M3226 629L3306 660V912L3226 892Z" fill="url(#ice)" />
    <path d="M3226 892L3306 912V1119L3226 1113Z" fill="#ff9a10" />
    <rect x="3226" y="1113" width="80" height="747" fill="url(#rgt)" />
    <path d="M3226 629L3306 660V640L3226 620Z" fill="#0566ad" />
    <rect x="0" y="1766" width="3306" height="94" fill="url(#bot)" />
    <rect x="0" y="1766" width="953" height="94" fill="url(#botshade)" />
  </svg>
);

export default function App() {
  return (
    <div className="relative w-[3306px] h-[1860px] overflow-hidden bg-[#0566ad] [font-family:'Liberation_Sans','Noto_Sans_CJK_SC',sans-serif]">
      <Wallpaper />
      <div className="relative">
        <Menubar />
      </div>
      <Window />
      <Dialog />
      <FileMenu />
      <Badge className="left-[63px] top-[-15px]" n="1" />
      <Badge className="left-[477px] top-[701px]" n="2" />
      <Badge className="left-[1248px] top-[614px]" n="3" />
    </div>
  );
}
